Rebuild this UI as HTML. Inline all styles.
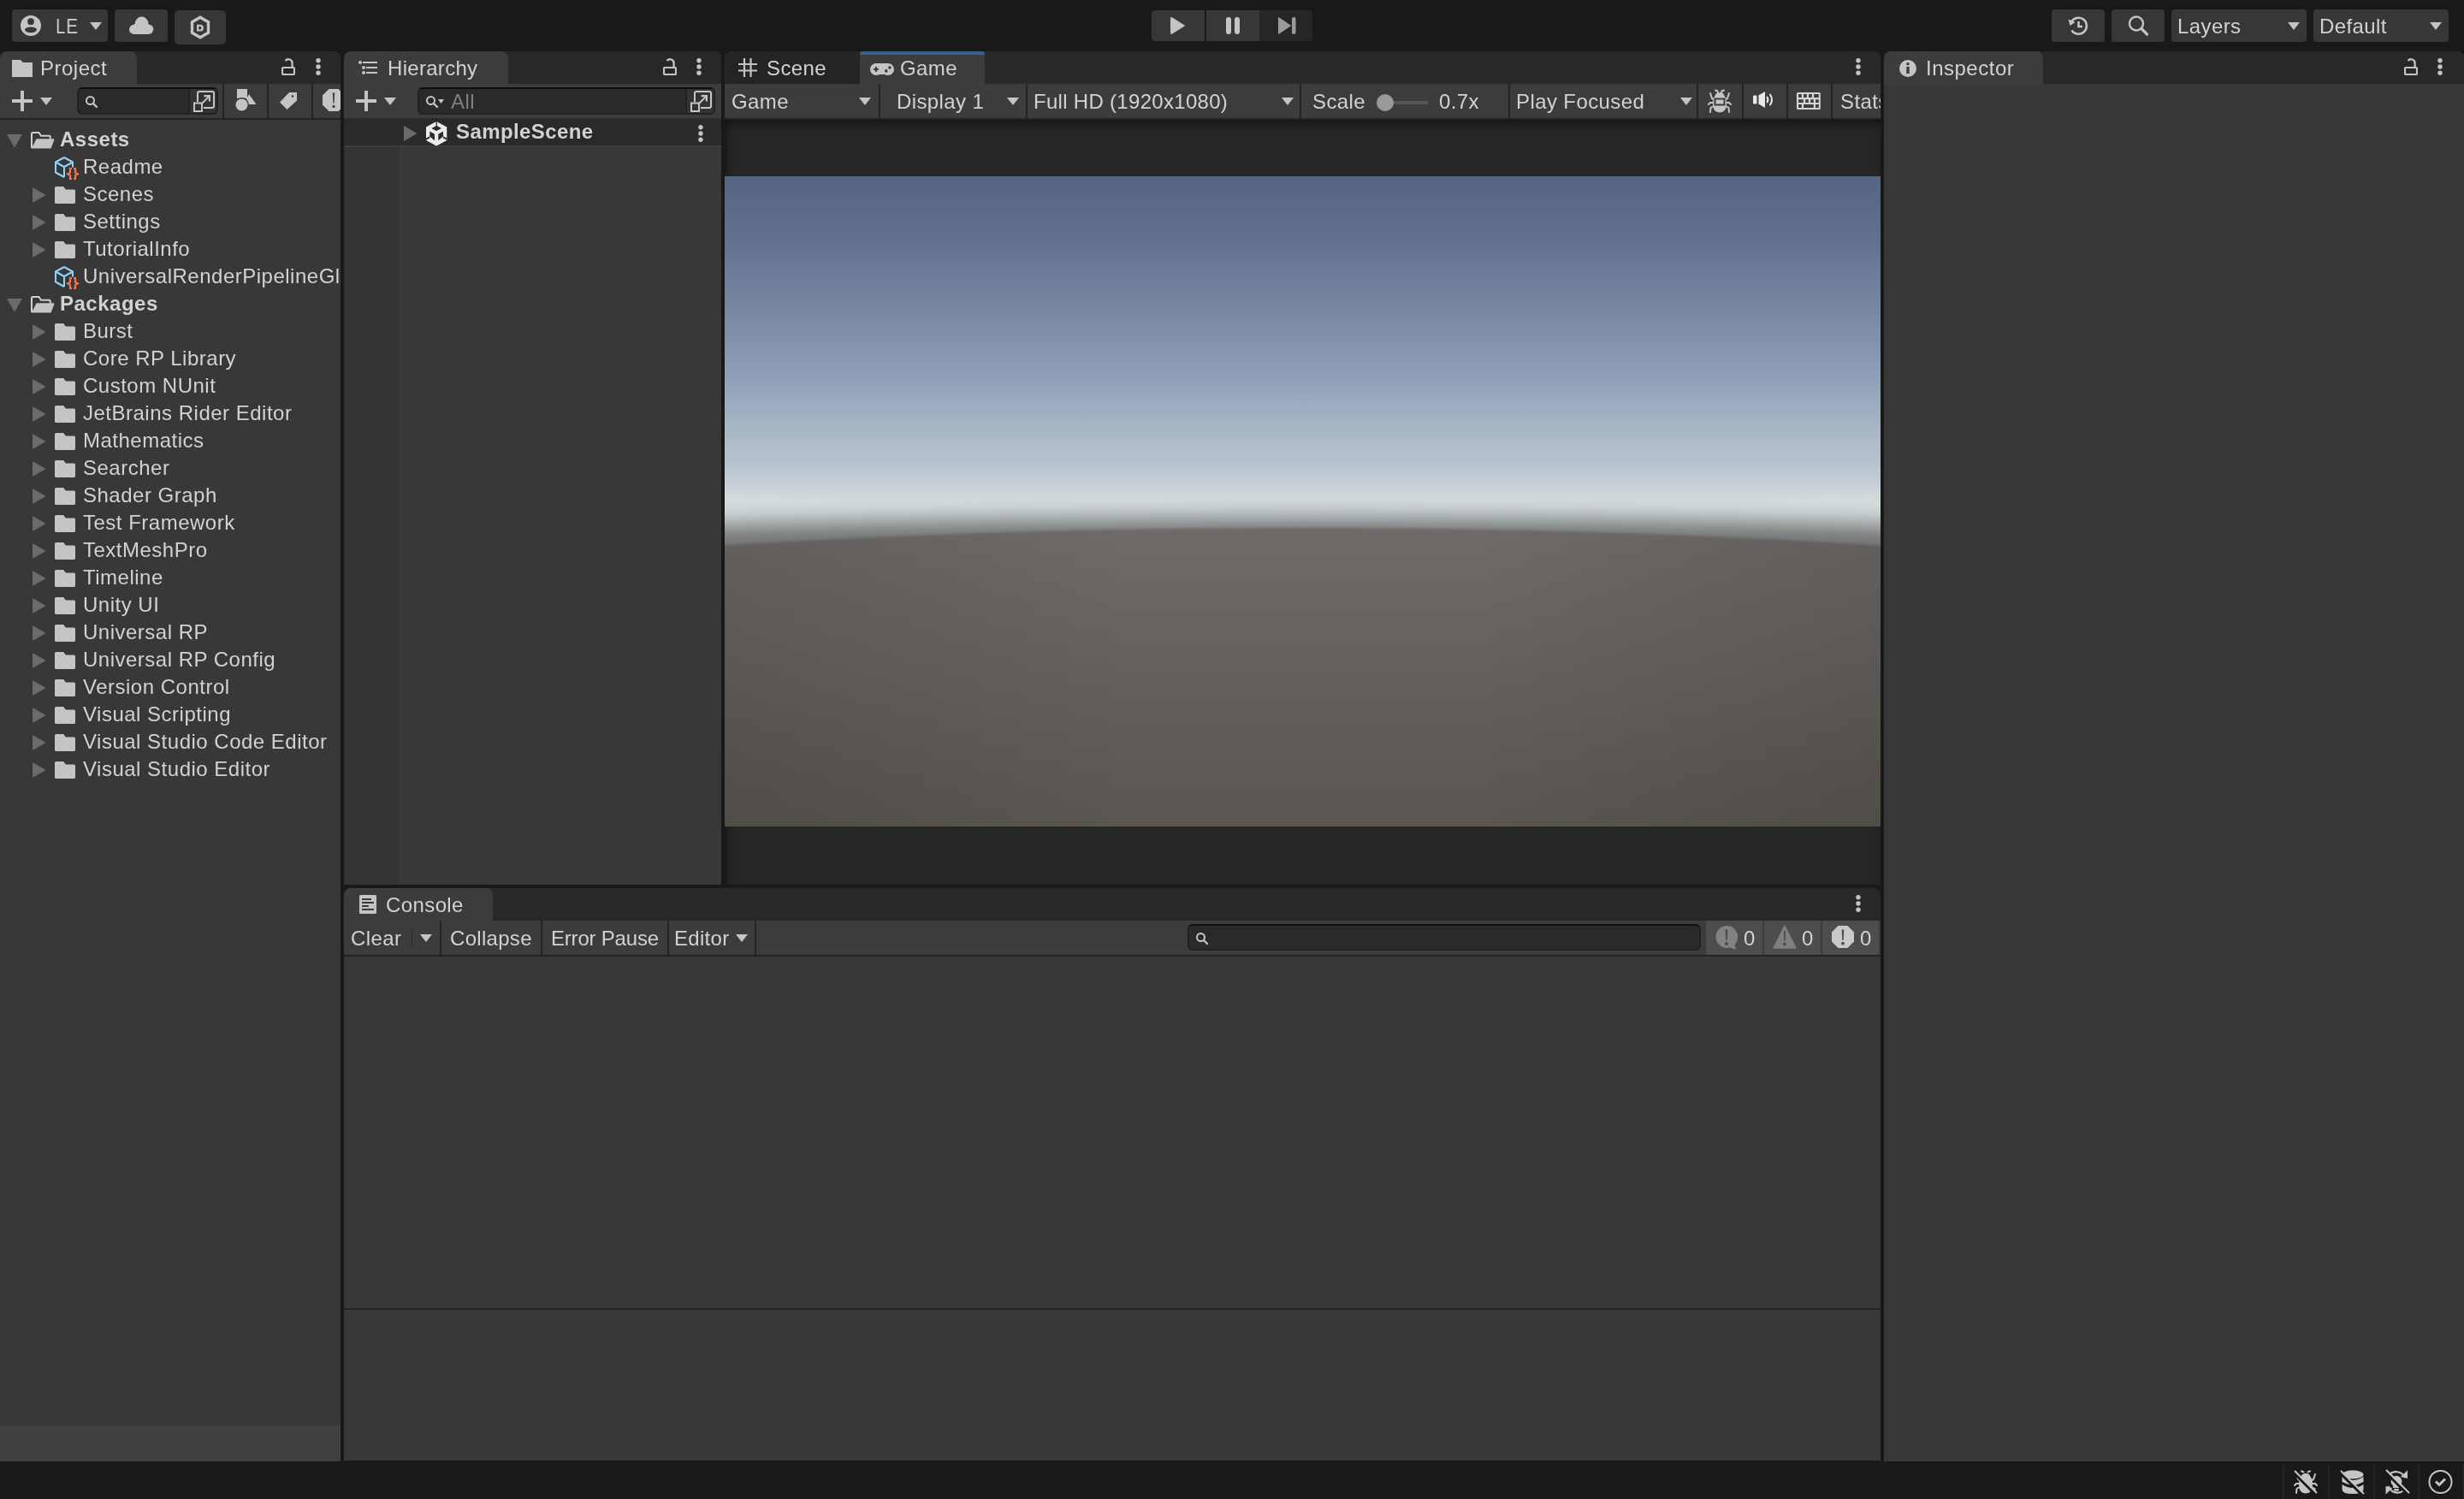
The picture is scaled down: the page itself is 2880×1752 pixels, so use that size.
<!DOCTYPE html>
<html><head><meta charset="utf-8"><style>
*{box-sizing:border-box;margin:0;padding:0}
html,body{width:2880px;height:1752px;overflow:hidden}
body{background:#191919;position:relative;font-family:"Liberation Sans",sans-serif;font-size:24px;color:#d2d2d2}
.a{position:absolute}
.btn{position:absolute;background:#373737;border-radius:4px}
.panel{position:absolute;background:#383838;overflow:hidden;border-radius:8px 8px 0 0}
.tabbar{position:absolute;left:0;right:0;top:0;height:38px;background:#282828;border-radius:8px 8px 0 0}
.tab{position:absolute;top:0;height:38px;background:#3c3c3c;border-radius:8px 8px 0 0}
.tbar{position:absolute;left:0;right:0;top:38px;height:42px;background:#3c3c3c;border-bottom:2px solid #232323}
.t{position:absolute;white-space:nowrap;line-height:32px;height:32px;will-change:transform;letter-spacing:0.4px}
svg{position:absolute;overflow:visible}
.ic{fill:#c4c4c4}
.tri{fill:#6b6b6b}
.sep{position:absolute;top:38px;width:2px;height:40px;background:#232323}
.field{position:absolute;background:#2a2a2a;border:2px solid #212121;border-top-color:#0f0f0f;border-radius:6px}
</style></head><body>

<!-- ============ TOP TOOLBAR ============ -->
<div class="btn" style="left:14px;top:11px;width:112px;height:38px"></div>
<svg style="left:24px;top:18px" width="24" height="24" viewBox="0 0 24 24"><circle class="ic" cx="12" cy="12" r="12"/><circle fill="#373737" cx="12" cy="7.2" r="3.9"/><ellipse fill="#373737" cx="12" cy="16.8" rx="7" ry="3.4"/></svg>
<div class="t" style="left:65px;top:15px;letter-spacing:1px;transform:scaleX(0.86);transform-origin:0 0">LE</div>
<svg style="left:105px;top:26px" width="14" height="9" viewBox="0 0 14 9"><path class="ic" d="M0 0H14L7 9Z"/></svg>

<div class="btn" style="left:134px;top:11px;width:62px;height:38px"></div>
<svg style="left:151px;top:19px" width="29" height="21" viewBox="0 0 29 21"><circle class="ic" cx="5.6" cy="15.4" r="5.6"/><circle class="ic" cx="14.6" cy="8.4" r="7.8"/><circle class="ic" cx="22.6" cy="15.3" r="5.7"/><rect class="ic" x="5.6" y="9" width="17" height="12"/></svg>

<div class="btn" style="left:204px;top:12px;width:60px;height:40px;border-radius:5px"></div>
<svg style="left:222px;top:18px" width="24" height="28" viewBox="0 0 24 28"><path fill="none" stroke="#c4c4c4" stroke-width="3.4" stroke-linejoin="miter" d="M12 2.2L21.5 7.7V20.3L12 25.8L2.5 20.3V7.7Z"/><path class="ic" fill-rule="evenodd" d="M8 10.8H11.6Q15.9 10.8 15.9 14.7Q15.9 18.6 11.6 18.6H8ZM10.3 12.8H11.4Q13.5 12.8 13.5 14.7Q13.5 16.6 11.4 16.6H10.3Z"/></svg>

<!-- play controls -->
<div class="btn" style="left:1346px;top:12px;width:62px;height:36px;border-radius:4px 0 0 4px"></div>
<div class="btn" style="left:1410px;top:12px;width:62px;height:36px;border-radius:0"></div>
<div class="btn" style="left:1472px;top:12px;width:62px;height:36px;border-radius:0 4px 4px 0;background:#262626"></div>
<svg style="left:1368px;top:20px" width="17" height="20" viewBox="0 0 17 20"><path class="ic" d="M1.5 0.5Q0.5 0 0.5 1.5V18.5Q0.5 20 1.5 19.5L16.5 10Z" stroke="#c4c4c4" stroke-linejoin="round"/></svg>
<svg style="left:1433px;top:20px" width="17" height="20" viewBox="0 0 17 20"><rect class="ic" x="0" y="0" width="6" height="20" rx="3"/><rect class="ic" x="10" y="0" width="6" height="20" rx="3"/></svg>
<svg style="left:1494px;top:20px" width="21" height="20" viewBox="0 0 21 20"><path fill="#9a9a9a" d="M0.5 0.5V19.5L14.5 10Z" stroke="#9a9a9a" stroke-linejoin="round"/><rect fill="#9a9a9a" x="16" y="0" width="4.5" height="20" rx="2.25"/></svg>

<!-- right toolbar -->
<div class="btn" style="left:2398px;top:11px;width:62px;height:38px"></div>
<svg style="left:2417px;top:18px" width="24" height="24" viewBox="0 0 24 24"><path fill="none" stroke="#c4c4c4" stroke-width="2.6" d="M3.5 9A9.5 9.5 0 1 1 4.5 17.5"/><path class="ic" d="M0.5 4.5L2.5 12L8.5 8Z"/><path fill="none" stroke="#c4c4c4" stroke-width="2.6" d="M12.5 7V13H17"/></svg>
<div class="btn" style="left:2468px;top:11px;width:62px;height:38px"></div>
<svg style="left:2487px;top:18px" width="25" height="24" viewBox="0 0 25 24"><circle fill="none" stroke="#c4c4c4" stroke-width="2.4" cx="10" cy="9.5" r="8"/><path stroke="#c4c4c4" stroke-width="3.2" stroke-linecap="round" d="M16 15.5L22.5 22"/></svg>
<div class="btn" style="left:2538px;top:11px;width:158px;height:38px"></div>
<div class="t" style="left:2545px;top:15px">Layers</div>
<svg style="left:2674px;top:26px" width="14" height="9" viewBox="0 0 14 9"><path class="ic" d="M0 0H14L7 9Z"/></svg>
<div class="btn" style="left:2704px;top:11px;width:158px;height:38px"></div>
<div class="t" style="left:2711px;top:15px">Default</div>
<svg style="left:2840px;top:26px" width="14" height="9" viewBox="0 0 14 9"><path class="ic" d="M0 0H14L7 9Z"/></svg>

<!-- ============ PROJECT PANEL ============ -->
<div class="panel" id="project" style="left:0;top:60px;width:398px;height:1648px">
  <div class="tabbar"></div>
  <div class="tab" style="left:0;width:160px"></div><svg style="left:329px;top:8px" width="17" height="20" viewBox="0 0 17 20"><path fill="none" stroke="#c4c4c4" stroke-width="2.3" d="M12.6 10.5V5.6A4.4 4.4 0 0 0 4.6 3.2"/><rect fill="none" stroke="#c4c4c4" stroke-width="2.1" x="1.05" y="11.05" width="13.9" height="7.9" rx="0.8"/></svg><svg style="left:369px;top:8px" width="6" height="20" viewBox="0 0 6 20"><circle class="ic" cx="3" cy="2.7" r="2.7"/><circle class="ic" cx="3" cy="10" r="2.7"/><circle class="ic" cx="3" cy="17.3" r="2.7"/></svg>
  <svg style="left:14px;top:10px" width="24" height="20" viewBox="0 0 24 20"><path class="ic" d="M0 0H10L13 3H24V20H0Z"/></svg>
  <div class="t" style="left:47px;top:4px;letter-spacing:0.5px">Project</div>
  
  <div class="tbar"></div>
  <svg style="left:14px;top:46px" width="24" height="24" viewBox="0 0 24 24"><path class="ic" d="M10 0H14V10H24V14H14V24H10V14H0V10H10Z"/></svg>
  <svg style="left:47px;top:54px" width="14" height="9" viewBox="0 0 14 9"><path class="ic" d="M0 0H14L7 9Z"/></svg>
  <div class="field" style="left:90px;top:42px;width:165px;height:32px"></div>
  <div class="a" style="left:220px;top:44px;width:33px;height:28px;background:#333;border-left:2px solid #212121;border-radius:0 4px 4px 0"></div>
  <svg style="left:100.0px;top:52.0px" width="14" height="14" viewBox="0 0 14 14"><circle fill="none" stroke="#c4c4c4" stroke-width="2" cx="5.5" cy="5.5" r="4.5"/><path stroke="#c4c4c4" stroke-width="2.4" stroke-linecap="round" d="M9 9L13 13"/></svg>
  <svg style="left:226.0px;top:46.0px" width="25" height="25" viewBox="0 0 25 25"><path fill="none" stroke="#c4c4c4" stroke-width="2" d="M5 13V3Q5 1 7 1H22Q24 1 24 3V18Q24 20 22 20H12"/><rect fill="none" stroke="#c4c4c4" stroke-width="2" x="1" y="14.5" width="9" height="9.5"/><path stroke="#c4c4c4" stroke-width="2" d="M9 16L19 6"/><path class="ic" d="M12.5 5H20V12.5L17.8 12.5V7.2H12.5Z"/></svg>
  <div class="sep" style="left:260px"></div>
  <div class="sep" style="left:312px"></div>
  <div class="sep" style="left:364px"></div>
  <svg style="left:275px;top:44px" width="25" height="26" viewBox="0 0 25 26"><rect class="ic" x="2" y="0" width="12" height="11"/><path class="ic" d="M16 6L24.5 18H10Z"/><circle fill="#3c3c3c" cx="7.5" cy="18.5" r="8.5"/><circle class="ic" cx="7.5" cy="18.5" r="7"/></svg>
  <svg style="left:327px;top:48px" width="20" height="20" viewBox="0 0 20 20"><path class="ic" d="M20 0V9.5L8.5 20L0 11.5L11 0ZM15 3.2A1.4 1.4 0 1 0 15 6A1.4 1.4 0 1 0 15 3.2Z" fill-rule="evenodd"/></svg>
  <svg style="left:377px;top:44px" width="26" height="26" viewBox="0 0 26 26"><path class="ic" d="M7.5 0H18.5L26 7.5V18.5L18.5 26H7.5L0 18.5V7.5Z"/><path fill="#3c3c3c" d="M11.8 4.5H14.2L13.6 16.5H12.4ZM13 18.8A1.6 1.6 0 1 1 13 22A1.6 1.6 0 1 1 13 18.8Z"/></svg>
  <svg style="left:8px;top:97px" width="18" height="16" viewBox="0 0 18 16"><path class="tri" d="M0 0H18L9 15.5Z"/></svg>
<svg style="left:36px;top:94px" width="28" height="20" viewBox="0 0 28 20"><path fill="none" stroke="#d0d0d0" stroke-width="2" d="M1 19V2.5Q1 1 2.5 1H9.5L12 4.8H21.3Q22.8 4.8 22.8 6.3V8.5"/><path class="ic" d="M6.6 8.2H26.3Q27.8 8.2 27.3 9.7L23.5 19.6H0.8Z"/></svg>
<div class="t" style="left:70px;top:87px;font-weight:bold;letter-spacing:0.5px">Assets</div>
<svg style="left:64px;top:123px" width="30" height="28" viewBox="0 0 30 28"><path fill="none" stroke="#8fd3fb" stroke-width="2" stroke-linejoin="round" d="M11 1L21 6.5V12.5M11 1L1 6.5V18.5L11 24M1 6.5L11 12L21 6.5M11 12V24"/><path fill="none" stroke="#f4764a" stroke-width="2.2" d="M20 14H18V18.6L15.2 20.3L18 22V26H20M22 14H24V18.6L26.8 20.3L24 22V26H22"/></svg>
<div class="t" style="left:97px;top:119px;letter-spacing:0.5px">Readme</div>
<svg style="left:38px;top:159px" width="16" height="18" viewBox="0 0 16 18"><path class="tri" d="M0 0L15.5 9L0 18Z"/></svg>
<svg style="left:64px;top:158px" width="24" height="20" viewBox="0 0 24 20"><path class="ic" d="M0 1.5Q0 0 1.5 0H10.2L12.8 3.6H22.5Q24 3.6 24 5.1V18.5Q24 20 22.5 20H1.5Q0 20 0 18.5Z"/></svg>
<div class="t" style="left:97px;top:151px;letter-spacing:0.5px">Scenes</div>
<svg style="left:38px;top:191px" width="16" height="18" viewBox="0 0 16 18"><path class="tri" d="M0 0L15.5 9L0 18Z"/></svg>
<svg style="left:64px;top:190px" width="24" height="20" viewBox="0 0 24 20"><path class="ic" d="M0 1.5Q0 0 1.5 0H10.2L12.8 3.6H22.5Q24 3.6 24 5.1V18.5Q24 20 22.5 20H1.5Q0 20 0 18.5Z"/></svg>
<div class="t" style="left:97px;top:183px;letter-spacing:0.5px">Settings</div>
<svg style="left:38px;top:223px" width="16" height="18" viewBox="0 0 16 18"><path class="tri" d="M0 0L15.5 9L0 18Z"/></svg>
<svg style="left:64px;top:222px" width="24" height="20" viewBox="0 0 24 20"><path class="ic" d="M0 1.5Q0 0 1.5 0H10.2L12.8 3.6H22.5Q24 3.6 24 5.1V18.5Q24 20 22.5 20H1.5Q0 20 0 18.5Z"/></svg>
<div class="t" style="left:97px;top:215px;letter-spacing:0.5px">TutorialInfo</div>
<svg style="left:64px;top:251px" width="30" height="28" viewBox="0 0 30 28"><path fill="none" stroke="#8fd3fb" stroke-width="2" stroke-linejoin="round" d="M11 1L21 6.5V12.5M11 1L1 6.5V18.5L11 24M1 6.5L11 12L21 6.5M11 12V24"/><path fill="none" stroke="#f4764a" stroke-width="2.2" d="M20 14H18V18.6L15.2 20.3L18 22V26H20M22 14H24V18.6L26.8 20.3L24 22V26H22"/></svg>
<div class="t" style="left:97px;top:247px;letter-spacing:0.5px">UniversalRenderPipelineGlobalSettings</div>
<svg style="left:8px;top:289px" width="18" height="16" viewBox="0 0 18 16"><path class="tri" d="M0 0H18L9 15.5Z"/></svg>
<svg style="left:36px;top:286px" width="28" height="20" viewBox="0 0 28 20"><path fill="none" stroke="#d0d0d0" stroke-width="2" d="M1 19V2.5Q1 1 2.5 1H9.5L12 4.8H21.3Q22.8 4.8 22.8 6.3V8.5"/><path class="ic" d="M6.6 8.2H26.3Q27.8 8.2 27.3 9.7L23.5 19.6H0.8Z"/></svg>
<div class="t" style="left:70px;top:279px;font-weight:bold;letter-spacing:0.5px">Packages</div>
<svg style="left:38px;top:319px" width="16" height="18" viewBox="0 0 16 18"><path class="tri" d="M0 0L15.5 9L0 18Z"/></svg>
<svg style="left:64px;top:318px" width="24" height="20" viewBox="0 0 24 20"><path class="ic" d="M0 1.5Q0 0 1.5 0H10.2L12.8 3.6H22.5Q24 3.6 24 5.1V18.5Q24 20 22.5 20H1.5Q0 20 0 18.5Z"/></svg>
<div class="t" style="left:97px;top:311px;letter-spacing:0.5px">Burst</div>
<svg style="left:38px;top:351px" width="16" height="18" viewBox="0 0 16 18"><path class="tri" d="M0 0L15.5 9L0 18Z"/></svg>
<svg style="left:64px;top:350px" width="24" height="20" viewBox="0 0 24 20"><path class="ic" d="M0 1.5Q0 0 1.5 0H10.2L12.8 3.6H22.5Q24 3.6 24 5.1V18.5Q24 20 22.5 20H1.5Q0 20 0 18.5Z"/></svg>
<div class="t" style="left:97px;top:343px;letter-spacing:0.5px">Core RP Library</div>
<svg style="left:38px;top:383px" width="16" height="18" viewBox="0 0 16 18"><path class="tri" d="M0 0L15.5 9L0 18Z"/></svg>
<svg style="left:64px;top:382px" width="24" height="20" viewBox="0 0 24 20"><path class="ic" d="M0 1.5Q0 0 1.5 0H10.2L12.8 3.6H22.5Q24 3.6 24 5.1V18.5Q24 20 22.5 20H1.5Q0 20 0 18.5Z"/></svg>
<div class="t" style="left:97px;top:375px;letter-spacing:0.5px">Custom NUnit</div>
<svg style="left:38px;top:415px" width="16" height="18" viewBox="0 0 16 18"><path class="tri" d="M0 0L15.5 9L0 18Z"/></svg>
<svg style="left:64px;top:414px" width="24" height="20" viewBox="0 0 24 20"><path class="ic" d="M0 1.5Q0 0 1.5 0H10.2L12.8 3.6H22.5Q24 3.6 24 5.1V18.5Q24 20 22.5 20H1.5Q0 20 0 18.5Z"/></svg>
<div class="t" style="left:97px;top:407px;letter-spacing:0.5px">JetBrains Rider Editor</div>
<svg style="left:38px;top:447px" width="16" height="18" viewBox="0 0 16 18"><path class="tri" d="M0 0L15.5 9L0 18Z"/></svg>
<svg style="left:64px;top:446px" width="24" height="20" viewBox="0 0 24 20"><path class="ic" d="M0 1.5Q0 0 1.5 0H10.2L12.8 3.6H22.5Q24 3.6 24 5.1V18.5Q24 20 22.5 20H1.5Q0 20 0 18.5Z"/></svg>
<div class="t" style="left:97px;top:439px;letter-spacing:0.5px">Mathematics</div>
<svg style="left:38px;top:479px" width="16" height="18" viewBox="0 0 16 18"><path class="tri" d="M0 0L15.5 9L0 18Z"/></svg>
<svg style="left:64px;top:478px" width="24" height="20" viewBox="0 0 24 20"><path class="ic" d="M0 1.5Q0 0 1.5 0H10.2L12.8 3.6H22.5Q24 3.6 24 5.1V18.5Q24 20 22.5 20H1.5Q0 20 0 18.5Z"/></svg>
<div class="t" style="left:97px;top:471px;letter-spacing:0.5px">Searcher</div>
<svg style="left:38px;top:511px" width="16" height="18" viewBox="0 0 16 18"><path class="tri" d="M0 0L15.5 9L0 18Z"/></svg>
<svg style="left:64px;top:510px" width="24" height="20" viewBox="0 0 24 20"><path class="ic" d="M0 1.5Q0 0 1.5 0H10.2L12.8 3.6H22.5Q24 3.6 24 5.1V18.5Q24 20 22.5 20H1.5Q0 20 0 18.5Z"/></svg>
<div class="t" style="left:97px;top:503px;letter-spacing:0.5px">Shader Graph</div>
<svg style="left:38px;top:543px" width="16" height="18" viewBox="0 0 16 18"><path class="tri" d="M0 0L15.5 9L0 18Z"/></svg>
<svg style="left:64px;top:542px" width="24" height="20" viewBox="0 0 24 20"><path class="ic" d="M0 1.5Q0 0 1.5 0H10.2L12.8 3.6H22.5Q24 3.6 24 5.1V18.5Q24 20 22.5 20H1.5Q0 20 0 18.5Z"/></svg>
<div class="t" style="left:97px;top:535px;letter-spacing:0.5px">Test Framework</div>
<svg style="left:38px;top:575px" width="16" height="18" viewBox="0 0 16 18"><path class="tri" d="M0 0L15.5 9L0 18Z"/></svg>
<svg style="left:64px;top:574px" width="24" height="20" viewBox="0 0 24 20"><path class="ic" d="M0 1.5Q0 0 1.5 0H10.2L12.8 3.6H22.5Q24 3.6 24 5.1V18.5Q24 20 22.5 20H1.5Q0 20 0 18.5Z"/></svg>
<div class="t" style="left:97px;top:567px;letter-spacing:0.5px">TextMeshPro</div>
<svg style="left:38px;top:607px" width="16" height="18" viewBox="0 0 16 18"><path class="tri" d="M0 0L15.5 9L0 18Z"/></svg>
<svg style="left:64px;top:606px" width="24" height="20" viewBox="0 0 24 20"><path class="ic" d="M0 1.5Q0 0 1.5 0H10.2L12.8 3.6H22.5Q24 3.6 24 5.1V18.5Q24 20 22.5 20H1.5Q0 20 0 18.5Z"/></svg>
<div class="t" style="left:97px;top:599px;letter-spacing:0.5px">Timeline</div>
<svg style="left:38px;top:639px" width="16" height="18" viewBox="0 0 16 18"><path class="tri" d="M0 0L15.5 9L0 18Z"/></svg>
<svg style="left:64px;top:638px" width="24" height="20" viewBox="0 0 24 20"><path class="ic" d="M0 1.5Q0 0 1.5 0H10.2L12.8 3.6H22.5Q24 3.6 24 5.1V18.5Q24 20 22.5 20H1.5Q0 20 0 18.5Z"/></svg>
<div class="t" style="left:97px;top:631px;letter-spacing:0.5px">Unity UI</div>
<svg style="left:38px;top:671px" width="16" height="18" viewBox="0 0 16 18"><path class="tri" d="M0 0L15.5 9L0 18Z"/></svg>
<svg style="left:64px;top:670px" width="24" height="20" viewBox="0 0 24 20"><path class="ic" d="M0 1.5Q0 0 1.5 0H10.2L12.8 3.6H22.5Q24 3.6 24 5.1V18.5Q24 20 22.5 20H1.5Q0 20 0 18.5Z"/></svg>
<div class="t" style="left:97px;top:663px;letter-spacing:0.5px">Universal RP</div>
<svg style="left:38px;top:703px" width="16" height="18" viewBox="0 0 16 18"><path class="tri" d="M0 0L15.5 9L0 18Z"/></svg>
<svg style="left:64px;top:702px" width="24" height="20" viewBox="0 0 24 20"><path class="ic" d="M0 1.5Q0 0 1.5 0H10.2L12.8 3.6H22.5Q24 3.6 24 5.1V18.5Q24 20 22.5 20H1.5Q0 20 0 18.5Z"/></svg>
<div class="t" style="left:97px;top:695px;letter-spacing:0.5px">Universal RP Config</div>
<svg style="left:38px;top:735px" width="16" height="18" viewBox="0 0 16 18"><path class="tri" d="M0 0L15.5 9L0 18Z"/></svg>
<svg style="left:64px;top:734px" width="24" height="20" viewBox="0 0 24 20"><path class="ic" d="M0 1.5Q0 0 1.5 0H10.2L12.8 3.6H22.5Q24 3.6 24 5.1V18.5Q24 20 22.5 20H1.5Q0 20 0 18.5Z"/></svg>
<div class="t" style="left:97px;top:727px;letter-spacing:0.5px">Version Control</div>
<svg style="left:38px;top:767px" width="16" height="18" viewBox="0 0 16 18"><path class="tri" d="M0 0L15.5 9L0 18Z"/></svg>
<svg style="left:64px;top:766px" width="24" height="20" viewBox="0 0 24 20"><path class="ic" d="M0 1.5Q0 0 1.5 0H10.2L12.8 3.6H22.5Q24 3.6 24 5.1V18.5Q24 20 22.5 20H1.5Q0 20 0 18.5Z"/></svg>
<div class="t" style="left:97px;top:759px;letter-spacing:0.5px">Visual Scripting</div>
<svg style="left:38px;top:799px" width="16" height="18" viewBox="0 0 16 18"><path class="tri" d="M0 0L15.5 9L0 18Z"/></svg>
<svg style="left:64px;top:798px" width="24" height="20" viewBox="0 0 24 20"><path class="ic" d="M0 1.5Q0 0 1.5 0H10.2L12.8 3.6H22.5Q24 3.6 24 5.1V18.5Q24 20 22.5 20H1.5Q0 20 0 18.5Z"/></svg>
<div class="t" style="left:97px;top:791px;letter-spacing:0.5px">Visual Studio Code Editor</div>
<svg style="left:38px;top:831px" width="16" height="18" viewBox="0 0 16 18"><path class="tri" d="M0 0L15.5 9L0 18Z"/></svg>
<svg style="left:64px;top:830px" width="24" height="20" viewBox="0 0 24 20"><path class="ic" d="M0 1.5Q0 0 1.5 0H10.2L12.8 3.6H22.5Q24 3.6 24 5.1V18.5Q24 20 22.5 20H1.5Q0 20 0 18.5Z"/></svg>
<div class="t" style="left:97px;top:823px;letter-spacing:0.5px">Visual Studio Editor</div>
  <div class="a" style="left:0;top:1606px;width:398px;height:42px;background:#404040"></div>
</div>

<!-- ============ HIERARCHY PANEL ============ -->
<div class="panel" id="hier" style="left:402px;top:60px;width:441px;height:974px">
  <div class="tabbar"></div>
  <div class="tab" style="left:0;width:192px"></div><svg style="left:373px;top:8px" width="17" height="20" viewBox="0 0 17 20"><path fill="none" stroke="#c4c4c4" stroke-width="2.3" d="M12.6 10.5V5.6A4.4 4.4 0 0 0 4.6 3.2"/><rect fill="none" stroke="#c4c4c4" stroke-width="2.1" x="1.05" y="11.05" width="13.9" height="7.9" rx="0.8"/></svg><svg style="left:412px;top:8px" width="6" height="20" viewBox="0 0 6 20"><circle class="ic" cx="3" cy="2.7" r="2.7"/><circle class="ic" cx="3" cy="10" r="2.7"/><circle class="ic" cx="3" cy="17.3" r="2.7"/></svg>
  <svg style="left:17px;top:11px" width="22" height="16" viewBox="0 0 22 16"><circle class="ic" cx="2" cy="2" r="2"/><rect class="ic" x="5" y="1" width="17" height="2"/><circle class="ic" cx="6" cy="8" r="2"/><rect class="ic" x="9" y="7" width="13" height="2"/><circle class="ic" cx="6" cy="14" r="2"/><rect class="ic" x="9" y="13" width="13" height="2"/></svg>
  <div class="t" style="left:51px;top:4px;letter-spacing:0.3px">Hierarchy</div>
  
  <div class="tbar" style="height:40px;border-bottom:none"></div>
  <svg style="left:14px;top:46px" width="24" height="24" viewBox="0 0 24 24"><path class="ic" d="M10 0H14V10H24V14H14V24H10V14H0V10H10Z"/></svg>
  <svg style="left:47px;top:54px" width="14" height="9" viewBox="0 0 14 9"><path class="ic" d="M0 0H14L7 9Z"/></svg>
  <div class="field" style="left:86px;top:42px;width:348px;height:32px"></div>
  <div class="a" style="left:399px;top:44px;width:33px;height:28px;background:#333;border-left:2px solid #212121;border-radius:0 4px 4px 0"></div>
  <svg style="left:96.0px;top:52.0px" width="14" height="14" viewBox="0 0 14 14"><circle fill="none" stroke="#c4c4c4" stroke-width="2" cx="5.5" cy="5.5" r="4.5"/><path stroke="#c4c4c4" stroke-width="2.4" stroke-linecap="round" d="M9 9L13 13"/></svg>
  <svg style="left:110px;top:56px" width="7" height="5" viewBox="0 0 7 5"><path class="ic" d="M0 0H7L3.5 5Z"/></svg>
  <div class="t" style="left:125px;top:43px;color:#7f7f7f">All</div>
  <svg style="left:405.0px;top:46.0px" width="25" height="25" viewBox="0 0 25 25"><path fill="none" stroke="#c4c4c4" stroke-width="2" d="M5 13V3Q5 1 7 1H22Q24 1 24 3V18Q24 20 22 20H12"/><rect fill="none" stroke="#c4c4c4" stroke-width="2" x="1" y="14.5" width="9" height="9.5"/><path stroke="#c4c4c4" stroke-width="2" d="M9 16L19 6"/><path class="ic" d="M12.5 5H20V12.5L17.8 12.5V7.2H12.5Z"/></svg>
  <div class="a" style="left:0;top:78px;width:441px;height:32px;background:#2a2a2a"></div>
  <div class="a" style="left:0;top:110px;width:441px;height:2px;background:#3d3d3d"></div>
  <div class="a" style="left:0;top:112px;width:64px;height:862px;background:#333333"></div>
  <svg style="left:70px;top:87px" width="16" height="18" viewBox="0 0 16 18"><path class="tri" d="M0 0L15.5 9L0 18Z"/></svg>
  <svg style="left:96.0px;top:81.5px" width="25" height="29" viewBox="0 0 25 29"><path fill="#ececec" fill-rule="evenodd" d="M12.2 0L24.3 6.6V22L12.2 28.6L0 22V6.6ZM6.4 7.9L12.2 4.8L18 7.9L12.2 11.1ZM4.3 11.6L10 14.8V22.3L4.3 17.4ZM20 11.6L14.3 14.8V22.3L20 17.4Z"/><path fill="#2a2a2a" d="M11.6 0H12.8V5.2H11.6ZM0 19.6L4.3 17.3V19.4L0 21.7ZM24.3 19.6L20 17.3V19.4L24.3 21.7Z"/></svg>
  <div class="t" style="left:131px;top:78px;font-weight:bold">SampleScene</div>
  <svg style="left:414.0px;top:86.0px" width="6" height="20" viewBox="0 0 6 20"><circle class="ic" cx="3" cy="2.7" r="2.7"/><circle class="ic" cx="3" cy="10" r="2.7"/><circle class="ic" cx="3" cy="17.3" r="2.7"/></svg>
</div>

<!-- ============ GAME PANEL ============ -->
<div class="panel" id="game" style="left:847px;top:60px;width:1351px;height:974px;background:#262626">
  <div class="tabbar"></div>
  <div class="tab" style="left:1px;width:157px;background:#242424"></div>
  <div class="tab" style="left:158px;width:146px"></div>
  <div class="a" style="left:158px;top:0;width:146px;height:4px;background:#385f8e;border-radius:3px 3px 0 0"></div>
  <svg style="left:16px;top:8px" width="22" height="22" viewBox="0 0 22 22"><path stroke="#c4c4c4" stroke-width="2.2" d="M7 0V22M14.5 0V22M0 7H22M0 14.5H22"/></svg>
  <div class="t" style="left:49px;top:4px;letter-spacing:0.4px">Scene</div>
  <svg style="left:170px;top:14px" width="28" height="14" viewBox="0 0 28 14"><path class="ic" d="M7 0H21A7 7 0 0 1 21 14Q18.5 14 17 13H11Q9.5 14 7 14A7 7 0 0 1 7 0Z"/><path fill="#3c3c3c" d="M6 4.1H8V6H9.9V8H8V9.9H6V8H4.1V6H6Z"/><circle fill="#3c3c3c" cx="22.9" cy="5" r="1.8"/><circle fill="#3c3c3c" cx="18.8" cy="8.9" r="1.8"/></svg>
  <div class="t" style="left:205px;top:4px;letter-spacing:0.4px">Game</div>
  <svg style="left:1322.0px;top:8.0px" width="6" height="20" viewBox="0 0 6 20"><circle class="ic" cx="3" cy="2.7" r="2.7"/><circle class="ic" cx="3" cy="10" r="2.7"/><circle class="ic" cx="3" cy="17.3" r="2.7"/></svg>
  <div class="tbar"></div>
  <div class="a" style="left:0;top:80px;width:1351px;height:894px;box-shadow:inset 0 10px 14px -6px rgba(0,0,0,0.5),inset 10px 0 10px -8px rgba(0,0,0,0.35)"></div>
  <div class="sep" style="left:180px"></div>
  <div class="sep" style="left:352px"></div>
  <div class="sep" style="left:672px"></div>
  <div class="sep" style="left:916px"></div>
  <div class="sep" style="left:1136px"></div>
  <div class="sep" style="left:1189px"></div>
  <div class="sep" style="left:1241px"></div>
  <div class="sep" style="left:1293px"></div>
  <div class="t" style="left:8px;top:43px;letter-spacing:0.4px">Game</div>
  <svg style="left:157px;top:54px" width="14" height="9" viewBox="0 0 14 9"><path class="ic" d="M0 0H14L7 9Z"/></svg>
  <div class="t" style="left:201px;top:43px;letter-spacing:0.4px">Display 1</div>
  <svg style="left:330px;top:54px" width="14" height="9" viewBox="0 0 14 9"><path class="ic" d="M0 0H14L7 9Z"/></svg>
  <div class="t" style="left:361px;top:43px;letter-spacing:0.3px">Full HD (1920x1080)</div>
  <svg style="left:651px;top:54px" width="14" height="9" viewBox="0 0 14 9"><path class="ic" d="M0 0H14L7 9Z"/></svg>
  <div class="t" style="left:687px;top:43px;letter-spacing:0.4px">Scale</div>
  <div class="a" style="left:782px;top:58px;width:40px;height:4px;background:#555"></div>
  <div class="a" style="left:762px;top:50px;width:20px;height:20px;border-radius:50%;background:#999"></div>
  <div class="t" style="left:835px;top:43px;letter-spacing:0.4px">0.7x</div>
  <div class="t" style="left:925px;top:43px;letter-spacing:0.4px">Play Focused</div>
  <svg style="left:1117px;top:54px" width="14" height="9" viewBox="0 0 14 9"><path class="ic" d="M0 0H14L7 9Z"/></svg>
  <svg style="left:1149.0px;top:44.0px" width="28" height="28" viewBox="0 0 28 28"><path stroke="#c4c4c4" stroke-width="2" fill="none" stroke-linecap="round" d="M9 1.5L11.5 2.5L12 5M19 1.5L16.5 2.5L16 5M3 5L5 11L7 12M25 5L23 11L21 12M1 18L3 16L7 16M27 18L25 16L21 16M3 27L3.5 22L7 20M25 27L24.5 22L21 20"/><path class="ic" d="M14 4Q18.5 4 19.5 8Q22 11 22 17Q22 27.5 14 27.5Q6 27.5 6 17Q6 11 8.5 8Q9.5 4 14 4Z"/><rect fill="none" stroke="#3c3c3c" stroke-width="2" x="8.5" y="11.5" width="11" height="7"/></svg>
  <svg style="left:1202.0px;top:47.0px" width="25" height="19" viewBox="0 0 25 19"><rect fill="#e8e8e8" x="0" y="4.5" width="4.5" height="10" rx="1.2"/><path fill="#e8e8e8" d="M6.5 4.5L14 0V19L6.5 14.5Z"/><path fill="none" stroke="#e8e8e8" stroke-width="2" stroke-linecap="round" d="M16.5 6.5Q18.5 9.5 16.5 12.5M20 3.5Q24 9.5 20 15.5"/></svg>
  <svg style="left:1253.0px;top:48.0px" width="28" height="20" viewBox="0 0 28 20"><path fill="#d4d4d4" fill-rule="evenodd" d="M1.5 0H26.3Q27.8 0 27.8 1.5V18.5Q27.8 20 26.3 20H1.5Q0 20 0 18.5V1.5Q0 0 1.5 0ZM2.1 2.1H5.8V6.0H2.1ZM8.1 2.1H11.8V6.0H8.1ZM14.1 2.1H17.8V6.0H14.1ZM20.2 2.1H25.8V6.0H20.2ZM2.1 8.2H7.8V11.9H2.1ZM10.2 8.2H13.8V11.9H10.2ZM16.2 8.2H19.8V11.9H16.2ZM22.1 8.2H25.8V11.9H22.1ZM2.1 14.1H5.8V17.9H2.1ZM8.1 14.1H19.8V17.9H8.1ZM22.1 14.1H25.8V17.9H22.1Z"/></svg>
  <div class="t" style="left:1304px;top:43px;letter-spacing:0.4px">Stats</div>
  <div class="a" id="gameimg" style="left:0;top:146px;width:1351px;height:760px;overflow:hidden;background:linear-gradient(#556481 0px,#64728f 80px,#7989a4 160px,#8f9fb7 235px,#aab8c6 299px,#b6c2cd 335px,#c4cfd4 357px,#d4dcdd 380px,#d2dadb 400px,#cfd7d8 430px)">
    <div class="a" style="left:-1325px;top:400px;width:4000px;height:400px;border-radius:2000px 2000px 0 0/136px 136px 0 0;background:#727474;filter:blur(13px)"></div>
    <div class="a" style="left:-1325px;top:411px;width:4000px;height:700px;border-radius:50%;background:linear-gradient(to right,rgba(0,0,0,.1) 1325px,rgba(0,0,0,0) 1800px,rgba(0,0,0,0) 2200px,rgba(0,0,0,.1) 2676px),linear-gradient(#6e6a68 0px,#67625e 137px,#5d5853 289px,#5a5550 349px);filter:blur(1.5px)"></div>
  </div>
</div>

<!-- ============ CONSOLE PANEL ============ -->
<div class="panel" id="console" style="left:402px;top:1038px;width:1796px;height:669px">
  <div class="tabbar"></div>
  <div class="tab" style="left:0;width:174px"></div>
  <svg style="left:18px;top:8px" width="20" height="22" viewBox="0 0 20 22"><rect class="ic" x="0" y="0" width="20" height="22" rx="1.5"/><path stroke="#3c3c3c" stroke-width="2" d="M3 5H14M3 9H17M3 13H11M3 17H17"/></svg>
  <div class="t" style="left:49px;top:4px;letter-spacing:0.4px">Console</div>
  <svg style="left:1767.0px;top:8.0px" width="6" height="20" viewBox="0 0 6 20"><circle class="ic" cx="3" cy="2.7" r="2.7"/><circle class="ic" cx="3" cy="10" r="2.7"/><circle class="ic" cx="3" cy="17.3" r="2.7"/></svg>
  <div class="tbar"></div>
  <div class="sep" style="left:79px;top:47px;height:22px;width:1px;background:#2a2a2a"></div>
  <div class="sep" style="left:112px"></div>
  <div class="sep" style="left:230px"></div>
  <div class="sep" style="left:378px"></div>
  <div class="sep" style="left:480px"></div>
  <div class="t" style="left:8px;top:43px;letter-spacing:0.4px">Clear</div>
  <svg style="left:89px;top:54px" width="14" height="9" viewBox="0 0 14 9"><path class="ic" d="M0 0H14L7 9Z"/></svg>
  <div class="t" style="left:124px;top:43px;letter-spacing:0.3px">Collapse</div>
  <div class="t" style="left:242px;top:43px;letter-spacing:-0.2px">Error Pause</div>
  <div class="t" style="left:386px;top:43px;letter-spacing:0.3px">Editor</div>
  <svg style="left:458px;top:54px" width="14" height="9" viewBox="0 0 14 9"><path class="ic" d="M0 0H14L7 9Z"/></svg>
  <div class="field" style="left:986px;top:42px;width:600px;height:31px"></div>
  <svg style="left:996.0px;top:52.0px" width="14" height="14" viewBox="0 0 14 14"><circle fill="none" stroke="#c4c4c4" stroke-width="2" cx="5.5" cy="5.5" r="4.5"/><path stroke="#c4c4c4" stroke-width="2.4" stroke-linecap="round" d="M9 9L13 13"/></svg>
  <div class="a" style="left:1592px;top:38px;width:66px;height:40px;background:#4d4d4d"></div>
  <div class="a" style="left:1660px;top:38px;width:66px;height:40px;background:#4d4d4d"></div>
  <div class="a" style="left:1728px;top:38px;width:66px;height:40px;background:#4d4d4d"></div>
  <svg style="left:1603px;top:44px" width="26" height="28" viewBox="0 0 26 28"><path fill="#828282" d="M13 0A13 13 0 0 1 22.5 22L24 28L17 25.5A13 13 0 1 1 13 0Z"/><path fill="#4d4d4d" d="M11.6 4.5H14.4L13.8 17H12.2ZM13 19A2 2 0 1 1 13 23A2 2 0 1 1 13 19Z"/></svg>
  <div class="t" style="left:1636px;top:43px">0</div>
  <svg style="left:1671px;top:44px" width="26" height="26" viewBox="0 0 26 26"><path fill="#7f7f7f" d="M13 0L26 26H0Z" stroke="#7f7f7f" stroke-linejoin="round" stroke-width="1.5"/><path fill="#4d4d4d" d="M11.8 6H14.2L13.7 18H12.3ZM13 19.5A1.9 1.9 0 1 1 13 23.3A1.9 1.9 0 1 1 13 19.5Z"/></svg>
  <div class="t" style="left:1704px;top:43px">0</div>
  <svg style="left:1739px;top:44px" width="26" height="26" viewBox="0 0 26 26"><path fill="#c8c8c8" d="M7.5 0H18.5L26 7.5V18.5L18.5 26H7.5L0 18.5V7.5Z"/><path fill="#4d4d4d" d="M11.7 4.5H14.3L13.7 17H12.3ZM13 18.8A1.9 1.9 0 1 1 13 22.6A1.9 1.9 0 1 1 13 18.8Z"/></svg>
  <div class="t" style="left:1772px;top:43px">0</div>
  <div class="a" style="left:0;top:491px;width:1796px;height:2px;background:#232323"></div>
</div>

<!-- ============ INSPECTOR PANEL ============ -->
<div class="panel" id="insp" style="left:2202px;top:60px;width:678px;height:1648px">
  <div class="tabbar"></div>
  <div class="tab" style="left:0;width:186px"></div>
  <svg style="left:18px;top:10px" width="20" height="20" viewBox="0 0 20 20"><circle class="ic" cx="10" cy="10" r="10"/><circle fill="#3c3c3c" cx="10" cy="4.8" r="1.8"/><rect fill="#3c3c3c" x="8.3" y="8" width="3.4" height="8"/></svg>
  <div class="t" style="left:49px;top:4px;letter-spacing:0.5px">Inspector</div>
  <svg style="left:608.0px;top:8.0px" width="17" height="20" viewBox="0 0 17 20"><path fill="none" stroke="#c4c4c4" stroke-width="2.3" d="M12.6 10.5V5.6A4.4 4.4 0 0 0 4.6 3.2"/><rect fill="none" stroke="#c4c4c4" stroke-width="2.1" x="1.05" y="11.05" width="13.9" height="7.9" rx="0.8"/></svg><svg style="left:647.0px;top:8.0px" width="6" height="20" viewBox="0 0 6 20"><circle class="ic" cx="3" cy="2.7" r="2.7"/><circle class="ic" cx="3" cy="10" r="2.7"/><circle class="ic" cx="3" cy="17.3" r="2.7"/></svg>
</div>

<!-- ============ STATUS BAR ============ -->
<div class="a" style="left:2668px;top:1712px;width:2px;height:40px;background:#232323"></div>
<div class="a" style="left:2721px;top:1712px;width:2px;height:40px;background:#232323"></div>
<div class="a" style="left:2774px;top:1712px;width:2px;height:40px;background:#232323"></div>
<div class="a" style="left:2826px;top:1712px;width:2px;height:40px;background:#232323"></div>
<div class="a" style="left:2878px;top:1712px;width:2px;height:40px;background:#232323"></div>
<svg style="left:2681px;top:1718px" width="29" height="29" viewBox="0 0 29 29"><path stroke="#c4c4c4" stroke-width="2" fill="none" stroke-linecap="round" d="M9 1.5L11.5 2.5M19 1.5L16.5 2.5M3 5L5 11L7 12M25 5L23 11L21 12M1 18L3 16L7 16M27 18L25 16L21 16M3 27L3.5 22L7 20M25 27L24.5 22L21 20"/><path class="ic" d="M14 4Q18.5 4 19.5 8Q22 11 22 17Q22 27.5 14 27.5Q6 27.5 6 17Q6 11 8.5 8Q9.5 4 14 4Z"/><path stroke="#191919" stroke-width="3" d="M-0.5 3L25.5 29"/><path stroke="#c4c4c4" stroke-width="2" d="M1 1L27 27"/></svg>
<svg style="left:2736px;top:1718px" width="29" height="29" viewBox="0 0 29 29"><ellipse class="ic" cx="14" cy="5.5" rx="12.5" ry="5"/><path class="ic" d="M1.5 8Q14 16 26.5 8V14Q14 21 1.5 14Z"/><path class="ic" d="M1.5 17Q14 25 26.5 17V22.5Q26.5 28 14 28Q1.5 28 1.5 22.5Z"/><path stroke="#191919" stroke-width="3" d="M-1.5 3L25.5 30"/><path stroke="#c4c4c4" stroke-width="2" d="M0 1L27 28"/></svg>
<svg style="left:2787px;top:1718px" width="29" height="29" viewBox="0 0 29 29"><path fill="none" stroke="#c4c4c4" stroke-width="2.2" d="M24 9A11.5 11.5 0 0 0 6 5M4.5 19A11.5 11.5 0 0 0 22.5 24"/><path class="ic" d="M27 0.5L27 10L19 8Z M1.5 28.5L1.5 19L9.5 21Z"/><path class="ic" d="M14 7A6.5 6.5 0 0 1 18 18.5V21H10V18.5A6.5 6.5 0 0 1 14 7Z"/><rect class="ic" x="11" y="22" width="6" height="2.5" rx="1"/><path stroke="#191919" stroke-width="3" d="M0.5 2L27.5 29"/><path stroke="#c4c4c4" stroke-width="2" d="M2 0L29 27"/></svg>
<svg style="left:2838px;top:1718px" width="29" height="29" viewBox="0 0 29 29"><circle fill="none" stroke="#c4c4c4" stroke-width="2" cx="14.5" cy="14" r="13"/><path fill="none" stroke="#c4c4c4" stroke-width="3" stroke-linejoin="miter" d="M9 13.5L13 17.5L20 10.5"/></svg>

</body></html>
